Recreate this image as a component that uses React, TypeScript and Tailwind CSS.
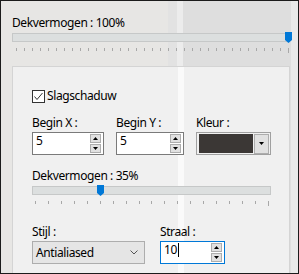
import React from "react";

// small arrow used in spin buttons
function SpinButton({ up }: { up: boolean }) {
  return (
    <div className="w-[11px] h-[9px] bg-[#e1e1e1] border border-[#adadad] flex items-center justify-center">
      <svg width="5" height="3" viewBox="0 0 5 3">
        <path d={up ? "M2.5 0L5 3H0Z" : "M0 0H5L2.5 3Z"} fill="#000" />
      </svg>
    </div>
  );
}

function Spinner() {
  return (
    <div className="flex flex-col gap-px mt-px mr-[2px]">
      <SpinButton up />
      <SpinButton up={false} />
    </div>
  );
}

interface NumberBoxProps {
  value: string;
  width: string;
  focused?: boolean;
}

function NumberBox({ value, width, focused = false }: NumberBoxProps) {
  return (
    <div
      className={`${width} h-[23px] bg-white border flex items-start justify-between ${
        focused ? "border-[#0078d7]" : "border-[#7a7a7a]"
      }`}
    >
      <div className="pl-[3px] leading-4 flex items-center">
        <span>{value}</span>
        {focused && <span className="w-px h-[14px] bg-black ml-px" />}
      </div>
      <Spinner />
    </div>
  );
}

interface SliderProps {
  width: string;
  thumbLeft: string;
  ticks: number;
  tickPad: string;
}

function Slider({ width, thumbLeft, ticks, tickPad }: SliderProps) {
  return (
    <div className={`${width} flex flex-col`}>
      <div className="relative h-[9px] bg-[#dcdfdf] border border-[#c6c8c8]">
        {/* thumb */}
        <svg
          className={`absolute top-[-2px] ${thumbLeft}`}
          width="7"
          height="11"
          viewBox="0 0 7 11"
        >
          <path d="M0 0H7V8L3.5 11L0 8Z" fill="#0078d7" />
        </svg>
      </div>
      <div className={`flex justify-between items-start mt-[6px] ${tickPad}`}>
        {Array.from({ length: ticks }).map((_, i) => (
          <div
            key={i}
            className={`w-px bg-[#a8a8a8] ${i === ticks - 1 ? "h-[5px]" : "h-[3px]"}`}
          />
        ))}
      </div>
    </div>
  );
}

export default function App() {
  return (
    <div className="w-[299px] h-[274px] overflow-hidden border border-[#1b1b1b] bg-[linear-gradient(to_right,#e7e6e4_167px,#e2e2e2_167px,#e2e2e2_176px,#ececec_176px,#ececec_182px,#dedede_182px,#dedede_290px,#e9e9e9_290px)] text-[12px] tracking-[-0.4px] text-black font-['Segoe_UI','Noto_Sans',sans-serif]">
      <div className="pl-[11px] pr-[8px] pt-[14px]">
        <div className="leading-4">Dekvermogen : 100%</div>
        <div className="mt-[2px]">
          <Slider width="w-[278px]" thumbLeft="left-[272px]" ticks={35} tickPad="pl-[4px] pr-[1px]" />
        </div>

        {/* Panel */}
        <div className="mt-[13px] h-[230px] bg-[linear-gradient(to_right,#f0f0f0_165px,#fafafa_165px,#fafafa_171px,#f0f0f0_171px)] border border-[#d4d4d4] pl-[19px] pt-[21px]">
          <div className="flex items-center gap-[2px]">
            <div className="w-[13px] h-[13px] bg-white border border-[#333333] flex items-center justify-center">
              <svg width="11" height="11" viewBox="0 0 11 11">
                <path d="M1.5 5.5L4 8.5L9.5 2" stroke="#333" strokeWidth="1" fill="none" />
              </svg>
            </div>
            <span className="leading-4">Slagschaduw</span>
          </div>

          <div className="flex gap-[12px] mt-[11px]">
            <div className="flex flex-col">
              <span className="leading-4">Begin X :</span>
              <div className="mt-px">
                <NumberBox value="5" width="w-[72px]" />
              </div>
            </div>
            <div className="flex flex-col">
              <span className="leading-4">Begin Y :</span>
              <div className="mt-px">
                <NumberBox value="5" width="w-[68px]" />
              </div>
            </div>
            <div className="flex flex-col">
              <span className="leading-4">Kleur :</span>
              <div className="mt-px w-[75px] h-[23px] border border-[#a0a0a0] bg-[#f0f0f0] flex items-center pl-[2px] gap-px">
                <div className="w-[54px] h-[19px] bg-[#3b3735]" />
                <div className="w-[15px] h-[20px] bg-[#e1e1e1] border border-[#adadad] flex items-center justify-center">
                  <svg width="5" height="3" viewBox="0 0 5 3">
                    <path d="M0 0H5L2.5 3Z" fill="#000" />
                  </svg>
                </div>
              </div>
            </div>
          </div>

          <div className="leading-4 mt-[13px]">Dekvermogen : 35%</div>
          <div className="mt-[2px]">
            <Slider width="w-[239px]" thumbLeft="left-[64px]" ticks={19} tickPad="pl-[3px] pr-[2px]" />
          </div>

          <div className="flex gap-[15px] mt-[18px]">
            <div className="flex flex-col">
              <span className="leading-4">Stijl :</span>
              <div className="mt-px w-[113px] h-[23px] bg-[#e5e5e5] border border-[#adadad] flex items-center justify-between pl-[3px] pr-[6px]">
                <span className="leading-4">Antialiased</span>
                <svg width="8" height="5" viewBox="0 0 8 5">
                  <path d="M0.5 0.5L4 4L7.5 0.5" stroke="#555" strokeWidth="1" fill="none" />
                </svg>
              </div>
            </div>
            <div className="flex flex-col">
              <span className="leading-4">Straal :</span>
              <div className="mt-px">
                <NumberBox value="10" width="w-[65px]" focused />
              </div>
            </div>
          </div>
        </div>
      </div>
    </div>
  );
}
